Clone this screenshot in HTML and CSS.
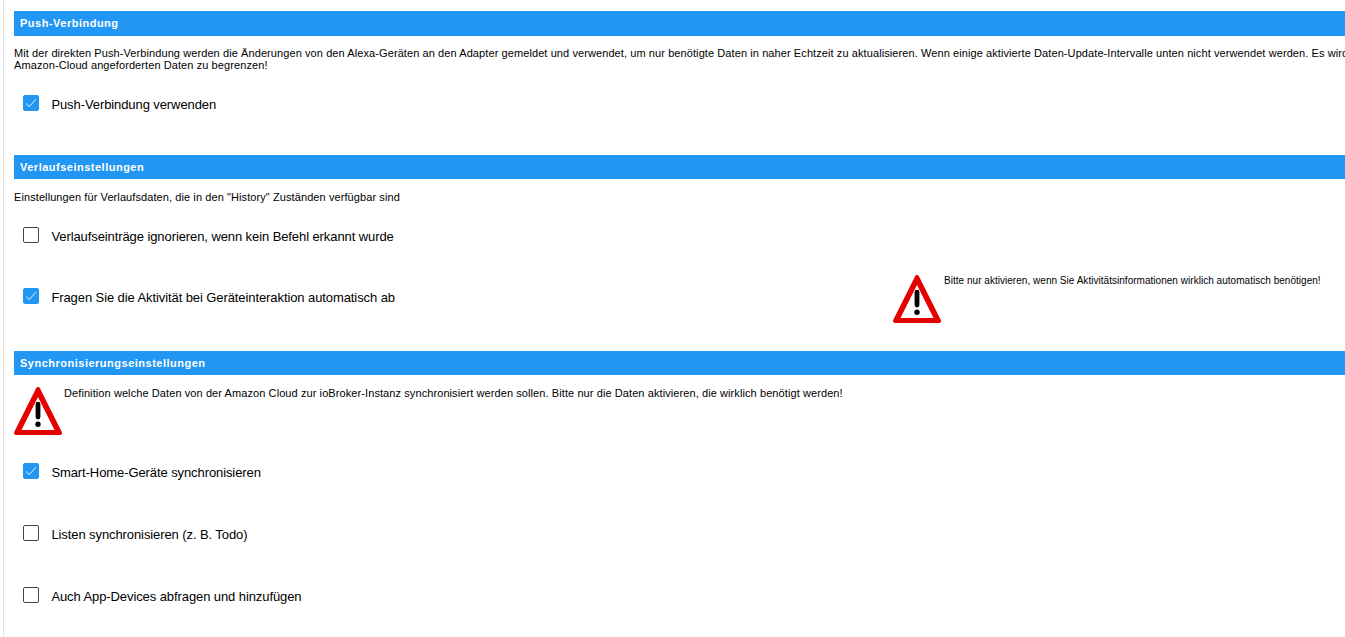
FILE: index.html
```
<!DOCTYPE html>
<html lang="de">
<head>
    <meta charset="UTF-8">
    <meta name="viewport" content="width=device-width, initial-scale=1.0">
    <title>Alexa Adapter</title>
    <link rel="stylesheet" href="styles.css">
</head>
<body>
    <svg class="symbols">
        <symbol id="check" viewBox="0 0 16 16">
            <path d="M3.2 8.6 6.3 11.6 12.8 4.2" fill="none" stroke="#fff" stroke-width=".9"/>
        </symbol>
        <symbol id="warning" viewBox="0 0 48 48">
            <path d="M24 2 46 46H2Z" fill="#e60000" stroke="#e60000" stroke-width="4" stroke-linejoin="round"/>
            <path d="M24 10 40.5 43H7.5Z" fill="#fff"/>
            <path d="M24 17.2V30" stroke="#000" stroke-width="4.8" stroke-linecap="round"/>
            <circle cx="24" cy="37.3" r="2.7"/>
        </symbol>
    </svg>

    <main>
        <section class="push">
            <h2>Push-Verbindung</h2>
            <p class="description">Mit der direkten Push-Verbindung werden die Änderungen von den Alexa-Geräten an den Adapter gemeldet und verwendet, um nur benötigte Daten in naher Echtzeit zu aktualisieren. Wenn einige aktivierte Daten-Update-Intervalle unten nicht verwendet werden. Es wird<br>Amazon-Cloud angeforderten Daten zu begrenzen!</p>
            <div class="row">
                <label><input type="checkbox" checked><svg class="check"><use href="#check"/></svg><span>Push-Verbindung verwenden</span></label>
            </div>
        </section>

        <section class="history">
            <h2>Verlaufseinstellungen</h2>
            <p class="description">Einstellungen für Verlaufsdaten, die in den "History" Zuständen verfügbar sind</p>
            <div class="row">
                <label><input type="checkbox"><svg class="check"><use href="#check"/></svg><span>Verlaufseinträge ignorieren, wenn kein Befehl erkannt wurde</span></label>
            </div>
            <div class="row">
                <label><input type="checkbox" checked><svg class="check"><use href="#check"/></svg><span>Fragen Sie die Aktivität bei Geräteinteraktion automatisch ab</span></label>
                <div class="hint">
                    <svg class="warning"><use href="#warning"/></svg>
                    <span>Bitte nur aktivieren, wenn Sie Aktivitätsinformationen wirklich automatisch benötigen!</span>
                </div>
            </div>
        </section>

        <section class="sync">
            <h2>Synchronisierungseinstellungen</h2>
            <div class="notice">
                <svg class="warning"><use href="#warning"/></svg>
                <p class="description">Definition welche Daten von der Amazon Cloud zur ioBroker-Instanz synchronisiert werden sollen. Bitte nur die Daten aktivieren, die wirklich benötigt werden!</p>
            </div>
            <div class="row">
                <label><input type="checkbox" checked><svg class="check"><use href="#check"/></svg><span>Smart-Home-Geräte synchronisieren</span></label>
            </div>
            <div class="row">
                <label><input type="checkbox"><svg class="check"><use href="#check"/></svg><span>Listen synchronisieren (z. B. Todo)</span></label>
            </div>
            <div class="row">
                <label><input type="checkbox"><svg class="check"><use href="#check"/></svg><span>Auch App-Devices abfragen und hinzufügen</span></label>
            </div>
        </section>
    </main>
</body>
</html>
```
FILE: styles.css
```
:root {
    --blue: #2196f3;
}
* {
    box-sizing: border-box;
}
body {
    margin: 0;
    height: 100vh;
    overflow: hidden;
    color: #000;
    background: #fff;
    font-family: "Liberation Sans", Arial, sans-serif;
}
.symbols {
    display: none;
}
main {
    height: 100%;
    margin-left: 3px;
    padding: 11px 0 0 10px;
    border-left: 1px solid #e0e0e0;
    white-space: nowrap;
}

h2 {
    height: 24px;
    margin: 0;
    padding-left: 6px;
    color: #fff;
    background: var(--blue);
    font-size: 11px;
    line-height: 24px;
    letter-spacing: .5px;
}
.push h2 {
    height: 25px;
}
.description {
    margin: 0;
    padding-top: 12px;
    font-size: 11px;
    line-height: 12px;
    letter-spacing: .088px;
}
.push .description {
    padding-top: 11px;
}

.row {
    display: flex;
    align-items: center;
    height: 62px;
}
.push .row {
    height: 64px;
    margin-bottom: 20px;
}
.history .row {
    height: 61px;
}
.history .row:nth-of-type(1) {
    margin-top: 1px;
}
.history {
    height: 196px;
}
label {
    display: flex;
    align-items: center;
    flex: 0 0 879px;
    padding-left: 9px;
    font-size: 13px;
    line-height: 16px;
    letter-spacing: -.09px;
}
label span {
    padding-top: 4px;
}
input {
    appearance: none;
    width: 16px;
    height: 16px;
    margin: 0;
    border: 1px solid #444;
    border-radius: 2px;
}
input:checked {
    border-color: var(--blue);
    background: var(--blue);
}
.check {
    width: 16px;
    height: 16px;
    margin: 0 12.4px 0 -16px;
}
input:not(:checked) + .check {
    visibility: hidden;
}

.warning {
    flex: none;
    width: 48px;
    height: 48px;
}
.hint, .notice {
    display: flex;
}
.hint {
    gap: 3px;
    padding-top: 6px;
    font-size: 10px;
    line-height: 12px;
    letter-spacing: .03px;
}
.notice {
    gap: 2px;
    height: 65px;
    padding-top: 12px;
}
.notice .description {
    padding-top: 0;
}
```
